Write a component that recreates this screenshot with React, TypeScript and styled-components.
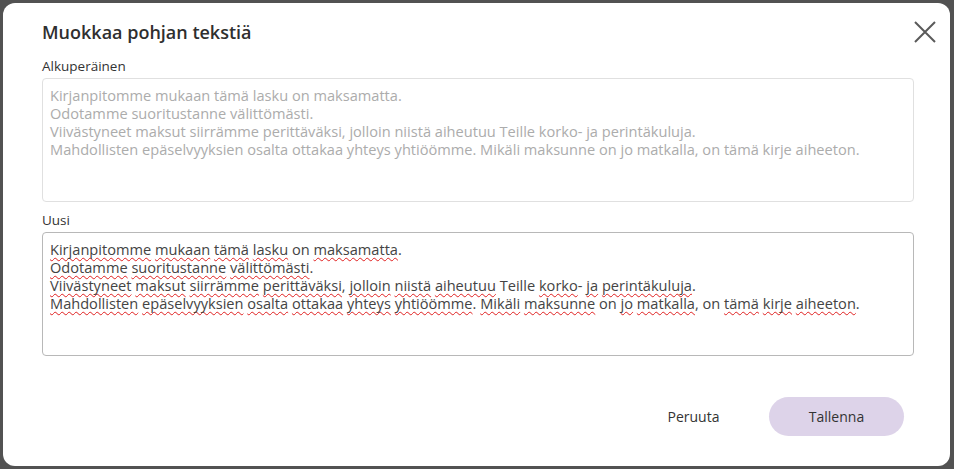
import React from 'react';
import styled, { createGlobalStyle } from 'styled-components';

const GlobalStyle = createGlobalStyle`
  html, body {
    margin: 0;
    padding: 0;
    background: #525252;
    font-family: "Open Sans", "Noto Sans", sans-serif;
  }
`;

const StyledBackdrop = styled.div`
  width: 954px;
  height: 469px;
  box-sizing: border-box;
  padding: 3px 4px 3px 3px;
  background: #525252;
`;

const StyledDialog = styled.div`
  display: flex;
  flex-direction: column;
  height: 100%;
  box-sizing: border-box;
  padding: 17px 36px 30px 39px;
  border-radius: 12px;
  background: #ffffff;
`;

const StyledHeader = styled.div`
  display: flex;
  align-items: center;
  justify-content: space-between;
  margin-bottom: 12px;
`;

const StyledTitle = styled.h2`
  margin: 0;
  font-size: 18px;
  line-height: 24px;
  font-weight: 600;
  color: #2f2f2f;
`;

const StyledCloseButton = styled.button`
  display: flex;
  align-items: center;
  justify-content: center;
  width: 24px;
  height: 24px;
  margin-right: -23px;
  padding: 0;
  border: none;
  background: none;
  cursor: pointer;
`;

const StyledLabel = styled.div`
  margin-bottom: 2px;
  font-size: 13.5px;
  line-height: 20px;
  color: #333333;
`;

const StyledField = styled.div<{ $active?: boolean }>`
  box-sizing: border-box;
  height: 124px;
  padding: 7px 7px;
  border: 1px solid ${(p) => (p.$active ? '#b8b8b8' : '#e0e0e0')};
  border-radius: 4px;
  font-size: 14.6px;
  line-height: 18px;
  color: ${(p) => (p.$active ? '#444444' : '#acacac')};
  white-space: pre-wrap;
`;

const StyledSection = styled.div`
  & + & {
    margin-top: 8px;
  }
`;

const StyledMisspelled = styled.span`
  text-decoration: underline wavy #e02020;
  text-decoration-thickness: 1px;
  text-underline-offset: 2px;
  text-decoration-skip-ink: none;
`;

const StyledFooter = styled.div`
  display: flex;
  justify-content: flex-end;
  gap: 8px;
  margin-top: auto;
  margin-right: 10px;
`;

const StyledButton = styled.button<{ $primary?: boolean }>`
  min-width: 135px;
  height: 39px;
  border: none;
  border-radius: 20px;
  background: ${(p) => (p.$primary ? '#ddd3e9' : 'transparent')};
  font-family: inherit;
  font-size: 14px;
  color: #333333;
  cursor: pointer;
`;

const LINES = [
  'Kirjanpitomme mukaan tämä lasku on maksamatta.',
  'Odotamme suoritustanne välittömästi.',
  'Viivästyneet maksut siirrämme perittäväksi, jolloin niistä aiheutuu Teille korko- ja perintäkuluja.',
  'Mahdollisten epäselvyyksien osalta ottakaa yhteys yhtiöömme. Mikäli maksunne on jo matkalla, on tämä kirje aiheeton.',
];

const CORRECT = new Set(['on', 'Teille']);

const renderLine = (line: string) =>
  line.split(' ').map((token, i) => {
    const match = token.match(/^([A-Za-zÀ-ÿ]+)(.*)$/);
    const sep = i > 0 ? ' ' : '';
    if (!match || CORRECT.has(match[1])) {
      return (
        <React.Fragment key={i}>
          {sep}
          {token}
        </React.Fragment>
      );
    }
    return (
      <React.Fragment key={i}>
        {sep}
        <StyledMisspelled>{match[1]}</StyledMisspelled>
        {match[2]}
      </React.Fragment>
    );
  });

const CloseIcon = () => (
  <svg width="24" height="24" viewBox="0 0 24 24" fill="none">
    <path d="M2 2L22 22M22 2L2 22" stroke="#5a5a5a" strokeWidth="2" />
  </svg>
);

const App = () => (
  <>
    <GlobalStyle />
    <StyledBackdrop>
      <StyledDialog>
        <StyledHeader>
          <StyledTitle>Muokkaa pohjan tekstiä</StyledTitle>
          <StyledCloseButton aria-label="Sulje">
            <CloseIcon />
          </StyledCloseButton>
        </StyledHeader>
        <StyledSection>
          <StyledLabel>Alkuperäinen</StyledLabel>
          <StyledField>{LINES.join('\n')}</StyledField>
        </StyledSection>
        <StyledSection>
          <StyledLabel>Uusi</StyledLabel>
          <StyledField $active>
            {LINES.map((line, i) => (
              <div key={i}>{renderLine(line)}</div>
            ))}
          </StyledField>
        </StyledSection>
        <StyledFooter>
          <StyledButton>Peruuta</StyledButton>
          <StyledButton $primary>Tallenna</StyledButton>
        </StyledFooter>
      </StyledDialog>
    </StyledBackdrop>
  </>
);

export default App;
